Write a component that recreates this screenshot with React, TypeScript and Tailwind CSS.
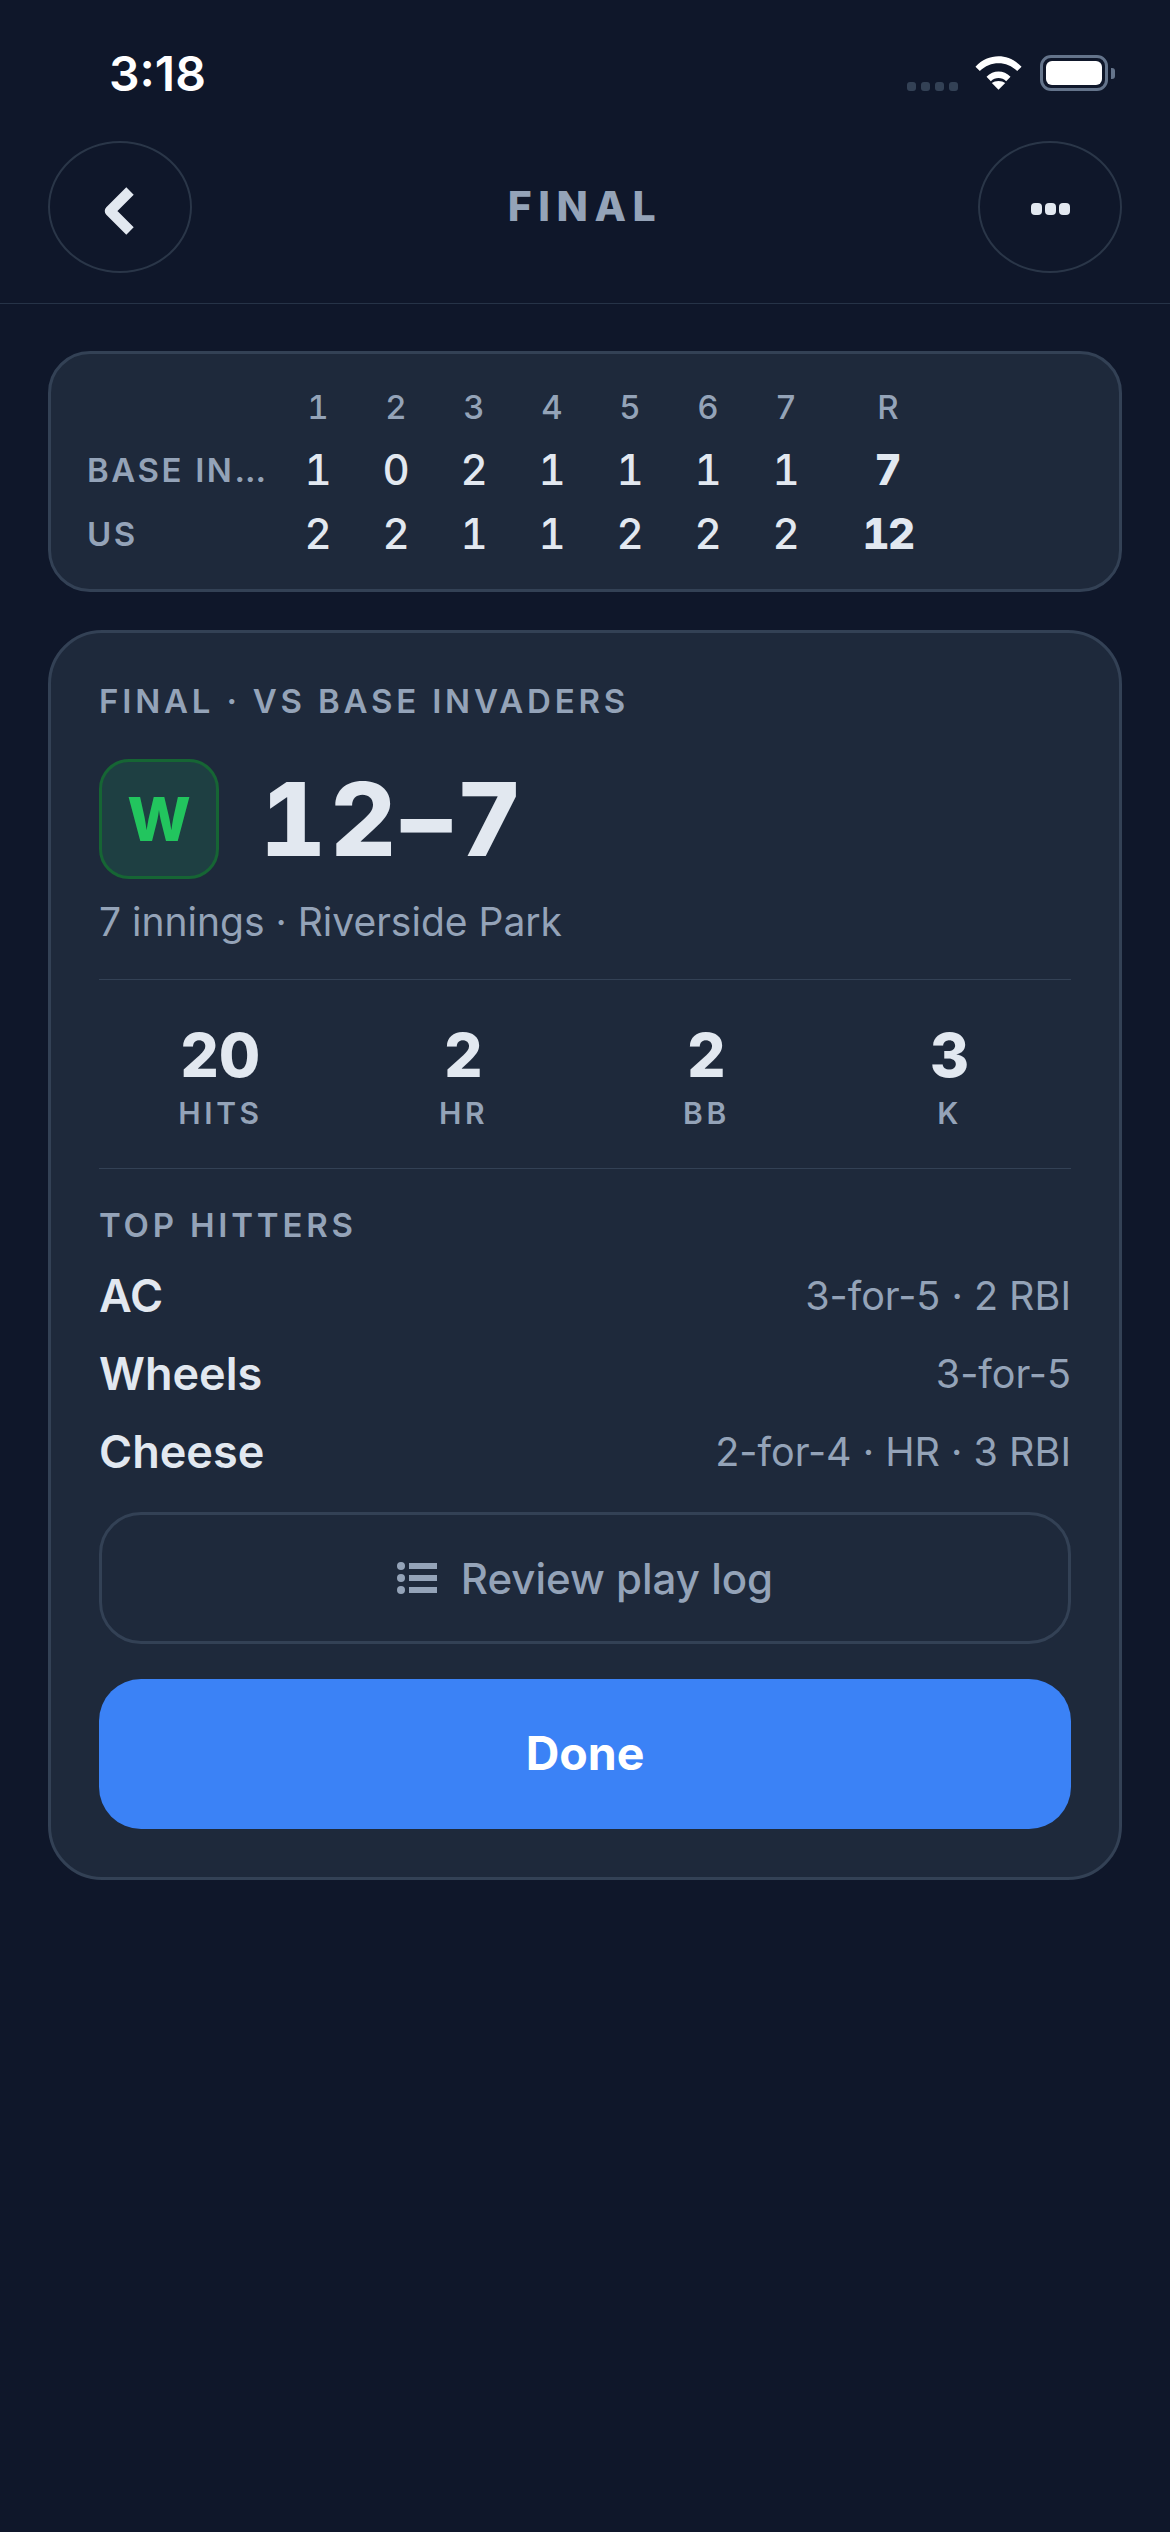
import React from 'react';

const innings = ['1', '2', '3', '4', '5', '6', '7'];
const them = [1, 0, 2, 1, 1, 1, 1];
const us = [2, 2, 1, 1, 2, 2, 2];

const stats = [
  { value: '20', label: 'HITS' },
  { value: '2', label: 'HR' },
  { value: '2', label: 'BB' },
  { value: '3', label: 'K' },
];

const hitters = [
  { name: 'AC', line: '3-for-5 · 2 RBI' },
  { name: 'Wheels', line: '3-for-5' },
  { name: 'Cheese', line: '2-for-4 · HR · 3 RBI' },
];

const StatusBar: React.FC = () => (
  <div className="flex h-[141px] items-start justify-between pl-[109px] pr-[55px] pt-[50px]">
    <span className="text-[48px] font-semibold leading-[48px] text-white">3:18</span>
    <div className="flex items-end pt-[5px]">
      <div className="flex gap-[5px]">
        {[0, 1, 2, 3].map((i) => (
          <span key={i} className="h-[9px] w-[9px] rounded-[3px] bg-[#334155]" />
        ))}
      </div>
      <svg className="ml-[17px]" width="48" height="36" viewBox="0 0 50 36">
        <path d="M0.5 11.5 C14 -3 35 -3 48.5 11.5 L44 16 C33 5 16 5 5 16 Z" fill="#fff" />
        <path d="M12 22 C19 14.500 30 14.500 37 22 L32.500 26.500 C28 22 21 22 16.500 26.500 Z" fill="#fff" />
        <path d="M24.500 35.500 L17.500 28.500 C21 25.500 28 25.500 31.500 28.500 Z" fill="#fff" />
      </svg>
      <div className="ml-[17px] flex items-center">
        <div className="flex h-[36px] w-[68px] items-center justify-center rounded-[11px] border-[3px] border-[#64748b]">
          <div className="h-[24px] w-[56px] rounded-[6px] bg-white" />
        </div>
        <span className="ml-[3px] h-[11px] w-[4px] rounded-r-[3px] bg-[#64748b]" />
      </div>
    </div>
  </div>
);

const Header: React.FC = () => (
  <div className="flex h-[163px] items-start justify-between border-b-[1.5px] border-[#263347] px-[48px]">
    <button className="flex h-[132px] w-[144px] items-center justify-center rounded-[50%] border-[2px] border-[#2a3648]">
      <svg width="31" height="48" viewBox="0 0 31 48" className="mr-[4px] mt-[8px]">
        <path d="M27 4 L7 24 L27 44" fill="none" stroke="#e2e8f0" strokeWidth="10.500" strokeLinejoin="round" />
      </svg>
    </button>
    <span className="mt-[41px] text-[41px] font-extrabold leading-[48px] tracking-[6.500px] text-[#94a3b8]">FINAL</span>
    <button className="flex h-[132px] w-[144px] items-center justify-center gap-[3px] rounded-[50%] border-[2px] border-[#2a3648] pt-[3px]">
      <span className="h-[12px] w-[11px] rounded-[4px] bg-[#e2e8f0]" />
      <span className="h-[12px] w-[11px] rounded-[4px] bg-[#e2e8f0]" />
      <span className="h-[12px] w-[11px] rounded-[4px] bg-[#e2e8f0]" />
    </button>
  </div>
);

const LineScore: React.FC = () => (
  <div className="mx-[48px] mt-[47px] rounded-[42px] border-[3px] border-[#334155] bg-[#1e293b] px-[36px] pb-[35px] pt-[33px] tabular-nums">
    <div className="grid grid-cols-[192px_repeat(7,78px)_126px] items-center">
      <span />
      {innings.map((n) => (
        <span key={n} className="text-center text-[33px] font-medium leading-[40px] text-[#94a3b8]">{n}</span>
      ))}
      <span className="text-center text-[33px] font-medium leading-[40px] text-[#94a3b8]">R</span>

      <span className="mt-[23px] truncate text-[33px] font-semibold leading-[40px] tracking-[2.500px] text-[#94a3b8]">BASE IN…</span>
      {them.map((n, i) => (
        <span key={i} className="mt-[23px] text-center text-[42px] font-medium leading-[40px] text-[#e2e8f0]">{n}</span>
      ))}
      <span className="mt-[23px] text-center text-[42px] font-extrabold leading-[40px] text-[#e2e8f0]">7</span>

      <span className="mt-[24px] text-[33px] font-semibold leading-[40px] tracking-[2.500px] text-[#94a3b8]">US</span>
      {us.map((n, i) => (
        <span key={i} className="mt-[24px] text-center text-[42px] font-medium leading-[40px] text-[#e2e8f0]">{n}</span>
      ))}
      <span className="mt-[24px] text-center text-[42px] font-extrabold leading-[40px] tracking-[-1.500px] text-[#e2e8f0]">12</span>
    </div>
  </div>
);

const Summary: React.FC = () => (
  <div className="mx-[48px] mt-[38px] rounded-[54px] border-[3px] border-[#334155] bg-[#1e293b] px-[48px] pb-[48px] pt-[48px]">
    <div className="text-[33px] font-semibold leading-[40px] tracking-[3.800px] text-[#94a3b8]">FINAL · VS BASE INVADERS</div>

    <div className="mt-[38px] flex items-center gap-[41px]">
      <div className="flex h-[120px] w-[120px] items-center justify-center rounded-[30px] border-[3px] border-[#166534] bg-[#1e3f42] text-[60px] font-extrabold text-[#22c55e]">W</div>
      <span className="text-[102px] font-extrabold leading-[120px] tracking-[4.500px] tabular-nums text-[#e2e8f0]">12–7</span>
    </div>

    <div className="mt-[18px] text-[39px] leading-[50px] text-[#94a3b8]">7 innings · Riverside Park</div>

    <div className="mt-[32px] grid grid-cols-4 border-y-[1.5px] border-[#334155] pb-[37px] pt-[35px]">
      {stats.map((s) => (
        <div key={s.label} className="flex flex-col items-center">
          <span className="text-[60px] font-extrabold leading-[80px] text-[#e2e8f0]">{s.value}</span>
          <span className="text-[30px] font-semibold leading-[36px] tracking-[3.600px] text-[#94a3b8]">{s.label}</span>
        </div>
      ))}
    </div>

    <div className="mt-[36px] text-[33px] font-semibold leading-[40px] tracking-[3.800px] text-[#94a3b8]">TOP HITTERS</div>

    <div className="mt-[21px] flex flex-col gap-[18px]">
      {hitters.map((h) => (
        <div key={h.name} className="flex items-center justify-between">
          <span className="text-[45px] font-semibold leading-[60px] text-[#e2e8f0]">{h.name}</span>
          <span className="text-[39.500px] leading-[60px] text-[#94a3b8]">{h.line}</span>
        </div>
      ))}
    </div>

    <button className="mt-[30px] flex h-[132px] w-full items-center justify-center gap-[24px] rounded-[42px] border-[3px] border-[#334155] text-[42px] font-medium text-[#94a3b8]">
      <svg width="40" height="32" viewBox="0 0 40 32" fill="#94a3b8">
        <circle cx="4" cy="4" r="4" />
        <circle cx="4" cy="16" r="4" />
        <circle cx="4" cy="28" r="4" />
        <rect x="12" y="1" width="28" height="6" />
        <rect x="12" y="13" width="28" height="6" />
        <rect x="12" y="25" width="28" height="6" />
      </svg>
      Review play log
    </button>

    <button className="mt-[35px] flex h-[150px] w-full items-center justify-center rounded-[42px] bg-[#3b82f6] text-[46.500px] font-bold text-white">
      Done
    </button>
  </div>
);

const App: React.FC = () => {
  return (
    <div className="min-h-[2532px] w-[1170px] bg-[#0f172a] font-['Inter',sans-serif] [font-optical-sizing:none]">
      <StatusBar />
      <Header />
      <LineScore />
      <Summary />
    </div>
  );
};

export default App;
